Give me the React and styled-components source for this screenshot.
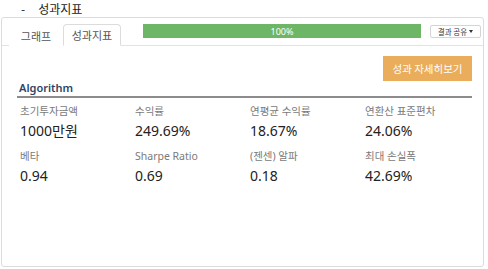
import React from "react";
import styled, { createGlobalStyle } from "styled-components";

const GlobalStyle = createGlobalStyle`
  html, body {
    margin: 0;
    padding: 0;
    background: #ffffff;
    font-family: "Noto Sans", "Noto Sans CJK KR", sans-serif;
  }
`;

const Page = styled.div`
  width: 488px;
  height: 269px;
  overflow: hidden;
  background: #fff;
`;

const Title = styled.div`
  height: 17px;
  display: flex;
  align-items: center;
  padding-left: 21px;
  font-size: 12px;
  color: #222;
  font-family: "Noto Sans CJK KR", sans-serif;
  span {
    margin-right: 13px;
  }
`;

const Panel = styled.div`
  margin-left: 1px;
  width: 483px;
  height: 250px;
  border: 1px solid #dcdcdc;
  border-radius: 3px;
  box-sizing: border-box;
`;

const TabBar = styled.div`
  height: 27px;
  display: flex;
  align-items: flex-end;
  padding-left: 7px;
  border-bottom: 1px solid #e3e3e3;
`;

const Tab = styled.div`
  flex-shrink: 0;
  white-space: nowrap;
  width: ${(p) => (p.$active ? "58px" : "54px")};
  box-sizing: border-box;
  height: ${(p) => (p.$active ? "22px" : "21px")};
  margin-bottom: -1px;
  display: flex;
  align-items: center;
  justify-content: center;
  font-size: 11px;
  color: #555;
  font-family: "Noto Sans CJK KR", sans-serif;
  background: #fff;
  border: 1px solid ${(p) => (p.$active ? "#dcdcdc" : "transparent")};
  border-bottom-color: ${(p) => (p.$active ? "#fff" : "transparent")};
  border-radius: 4px 4px 0 0;
`;

const Progress = styled.div`
  flex-shrink: 0;
  align-self: flex-start;
  margin: 6px 0 0 22px;
  width: 278px;
  height: 14px;
  background: #6cb665;
  color: #fff;
  font-size: 9px;
  display: flex;
  align-items: center;
  justify-content: center;
  font-family: "Noto Sans", sans-serif;
`;

const ShareButton = styled.div`
  flex-shrink: 0;
  white-space: nowrap;
  align-self: flex-start;
  margin: 7px 0 0 9px;
  width: 51px;
  height: 13px;
  box-sizing: border-box;
  border: 1px solid #d4d4d4;
  border-radius: 2px;
  font-size: 7.5px;
  color: #333;
  display: flex;
  align-items: center;
  justify-content: center;
  gap: 2px;
  font-family: "Noto Sans CJK KR", sans-serif;
  i {
    display: inline-block;
    width: 0;
    height: 0;
    border-left: 2.5px solid transparent;
    border-right: 2.5px solid transparent;
    border-top: 3px solid #333;
  }
`;

const Content = styled.div`
  padding: 0 11px 0 15px;
`;

const Actions = styled.div`
  display: flex;
  justify-content: flex-end;
  padding-top: 10px;
`;

const DetailButton = styled.div`
  width: 89px;
  height: 25px;
  background: #e9ad5b;
  color: #fff;
  font-size: 10.5px;
  display: flex;
  align-items: center;
  justify-content: center;
  font-family: "Noto Sans CJK KR", sans-serif;
`;

const Heading = styled.div`
  font-size: 11px;
  font-weight: 600;
  color: #2e4467;
  padding: 0 0 1px 2px;
  line-height: 14px;
  border-bottom: 2px solid #8c8c8c;
  font-family: "Noto Sans", sans-serif;
`;

const Grid = styled.div`
  display: grid;
  grid-template-columns: repeat(4, 115px);
  padding: 5px 0 0 3px;
  row-gap: 7px;
`;

const Stat = styled.div`
  display: flex;
  flex-direction: column;
`;

const Label = styled.div`
  font-size: 10.5px;
  color: #7a7a7a;
  line-height: 16px;
  font-family: "Noto Sans", "Noto Sans CJK KR", sans-serif;
`;

const Value = styled.div`
  font-size: 14px;
  color: #222;
  line-height: 20px;
  margin-top: 2px;
  font-family: "Noto Sans", "Noto Sans CJK KR", sans-serif;
`;

const stats = [
  ["초기투자금액", "1000만원"],
  ["수익률", "249.69%"],
  ["연평균 수익률", "18.67%"],
  ["연환산 표준편차", "24.06%"],
  ["베타", "0.94"],
  ["Sharpe Ratio", "0.69"],
  ["(젠센) 알파", "0.18"],
  ["최대 손실폭", "42.69%"],
];

export default function App() {
  return (
    <Page>
      <GlobalStyle />
      <Title>
        <span>-</span>성과지표
      </Title>
      <Panel>
        <TabBar>
          <Tab>그래프</Tab>
          <Tab $active>성과지표</Tab>
          <Progress>100%</Progress>
          <ShareButton>
            결과 공유 <i />
          </ShareButton>
        </TabBar>
        <Content>
          <Actions>
            <DetailButton>성과 자세히보기</DetailButton>
          </Actions>
          <Heading>Algorithm</Heading>
          <Grid>
            {stats.map(([label, value]) => (
              <Stat key={label}>
                <Label>{label}</Label>
                <Value>{value}</Value>
              </Stat>
            ))}
          </Grid>
        </Content>
      </Panel>
    </Page>
  );
}
